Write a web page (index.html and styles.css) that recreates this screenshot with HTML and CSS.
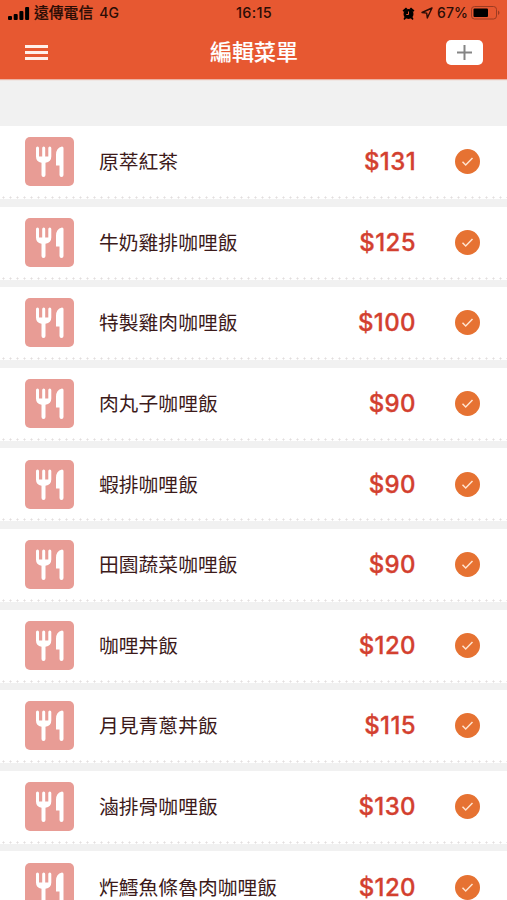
FILE: index.html
```html
<!DOCTYPE html>
<html lang="zh-Hant">
<head>
    <meta charset="UTF-8">
    <meta name="viewport" content="width=device-width, initial-scale=1.0">
    <title>編輯菜單</title>
    <link rel="stylesheet" href="styles.css">
</head>
<body>

<!-- shared icons -->
<svg class="sprite">
    <symbol id="icon-food" viewBox="0 0 49 49">
        <path d="M11 11v8.500q0 5.500 5.500 6.300V38a2 2 0 0 0 4 0V25.800q5.800-.8 5.800-6.300V11a1.500 1.500 0 0 0-3 0v8.500h-3.100V11a1.500 1.500 0 0 0-3 0v8.500h-3.200V11a1.500 1.500 0 0 0-3 0z"/>
        <path d="M38.500 11v27a2 2 0 0 1-4 0V28.500H31V18q0-7.500 6-8.500 1.500 0 1.500 1.500z"/>
    </symbol>
    <symbol id="icon-check" viewBox="0 0 25 25">
        <path d="M7.500 12.800l3.200 3.200 6.800-7"/>
    </symbol>
</svg>

<header class="header">
    <div class="status-bar">
        <div class="status-left">
            <svg class="signal" viewBox="0 0 22 13">
                <rect x="0" y="9" width="4" height="4" rx="1"/>
                <rect x="5.700" y="7" width="4" height="6" rx="1"/>
                <rect x="11.400" y="4" width="4" height="9" rx="1"/>
                <rect x="17.100" y="0" width="4" height="13" rx="1"/>
            </svg>
            <span class="carrier">遠傳電信</span>
            <span class="network">4G</span>
        </div>
        <div class="time">16:15</div>
        <div class="status-right">
            <svg class="alarm" viewBox="0 0 12 13">
                <circle cx="6" cy="7" r="5"/>
                <path d="M0 3.500L3.500.5 5 2 1.500 5zM12 3.500L8.500.5 7 2l3.500 3zM2 10l2 1-2 2-1-1zM10 10l-2 1 2 2 1-1z"/>
                <path class="hands" d="M6 4.500V7.500H3.800"/>
            </svg>
            <svg class="location" viewBox="0 0 12 12">
                <path d="M11 1L1 5.500l4.700.6L6.300 11z"/>
            </svg>
            <span class="percent">67%</span>
            <svg class="battery" viewBox="0 0 29 14">
                <rect class="shell" x=".5" y=".5" width="25" height="12.500" rx="3"/>
                <rect x="2.500" y="2.500" width="14.500" height="8.500" rx="1"/>
                <path class="tip" d="M27 4.500q1.500.7 1.500 2.300T27 9z"/>
            </svg>
        </div>
    </div>
    <nav class="nav-bar">
        <button class="menu-btn" aria-label="menu"><i></i><i></i><i></i></button>
        <h1>編輯菜單</h1>
        <button class="add-btn" aria-label="add">
            <svg viewBox="0 0 15 15"><path d="M7.500 0v15M0 7.500h15"/></svg>
        </button>
    </nav>
</header>

<ul class="menu-list">
    <li class="item">
        <svg class="food"><use href="#icon-food"/></svg>
        <span class="name">原萃紅茶</span><span class="price">$131</span>
        <svg class="check"><use href="#icon-check"/></svg>
    </li>
    <li class="item">
        <svg class="food"><use href="#icon-food"/></svg>
        <span class="name">牛奶雞排咖哩飯</span><span class="price">$125</span>
        <svg class="check"><use href="#icon-check"/></svg>
    </li>
    <li class="item">
        <svg class="food"><use href="#icon-food"/></svg>
        <span class="name">特製雞肉咖哩飯</span><span class="price">$100</span>
        <svg class="check"><use href="#icon-check"/></svg>
    </li>
    <li class="item">
        <svg class="food"><use href="#icon-food"/></svg>
        <span class="name">肉丸子咖哩飯</span><span class="price">$90</span>
        <svg class="check"><use href="#icon-check"/></svg>
    </li>
    <li class="item">
        <svg class="food"><use href="#icon-food"/></svg>
        <span class="name">蝦排咖哩飯</span><span class="price">$90</span>
        <svg class="check"><use href="#icon-check"/></svg>
    </li>
    <li class="item">
        <svg class="food"><use href="#icon-food"/></svg>
        <span class="name">田園蔬菜咖哩飯</span><span class="price">$90</span>
        <svg class="check"><use href="#icon-check"/></svg>
    </li>
    <li class="item">
        <svg class="food"><use href="#icon-food"/></svg>
        <span class="name">咖哩丼飯</span><span class="price">$120</span>
        <svg class="check"><use href="#icon-check"/></svg>
    </li>
    <li class="item">
        <svg class="food"><use href="#icon-food"/></svg>
        <span class="name">月見青蔥丼飯</span><span class="price">$115</span>
        <svg class="check"><use href="#icon-check"/></svg>
    </li>
    <li class="item">
        <svg class="food"><use href="#icon-food"/></svg>
        <span class="name">滷排骨咖哩飯</span><span class="price">$130</span>
        <svg class="check"><use href="#icon-check"/></svg>
    </li>
    <li class="item">
        <svg class="food"><use href="#icon-food"/></svg>
        <span class="name">炸鱈魚條魯肉咖哩飯</span><span class="price">$120</span>
        <svg class="check"><use href="#icon-check"/></svg>
    </li>
</ul>

</body>
</html>
```
FILE: styles.css
```css
* {
    box-sizing: border-box;
}
body {
    margin: 0;
    height: 900px;
    overflow: hidden;
    background: #f1f1f1;
    font-family: Inter, "Noto Sans CJK TC", sans-serif;
    color: #3c1a1a;
}
.sprite {
    display: none;
}
.header {
    height: 79px;
    background: #e75831;
    box-shadow: 0 1px 1px rgba(231, 88, 49, 0.4);
}
.status-bar {
    display: grid;
    grid-template-columns: 1fr auto 1fr;
    align-items: center;
    height: 26px;
    padding: 0 7px 0 8px;
    font-size: 14px;
    font-weight: 500;
    line-height: 26px;
    color: #2b0d06;
}
.status-left, .status-right {
    display: flex;
    align-items: center;
}
.status-right {
    justify-content: flex-end;
}
.signal {
    width: 22px;
    height: 13px;
    margin-right: 4px;
}
.carrier {
    font-size: 14.8px;
    margin-right: 6px;
    -webkit-text-stroke: 0.2px #2b0d06;
}
.time {
    font-size: 14.5px;
    font-weight: 500;
    letter-spacing: 0.3px;
}
.percent {
    letter-spacing: 0.1px;
}
.alarm {
    width: 13px;
    height: 13px;
    margin-right: 6px;
}
.hands {
    fill: none;
    stroke: #e75831;
}
.location {
    width: 12px;
    height: 12px;
    margin-right: 4px;
}
.location path {
    fill: none;
    stroke: #2b0d06;
    stroke-width: 1.4;
    stroke-linejoin: round;
}
.battery {
    width: 29px;
    height: 14px;
    margin-left: 3px;
}
.shell {
    fill: none;
    stroke: #9c3b22;
}
.tip {
    fill: #9c3b22;
}
.nav-bar {
    display: grid;
    grid-template-columns: 1fr auto 1fr;
    align-items: center;
    height: 52px;
    padding: 0 24px 0 25px;
}
.nav-bar h1 {
    margin: 0;
    font-size: 22px;
    font-weight: 500;
    line-height: 50px;
    color: #fff;
    -webkit-text-stroke: 0.1px #fff;
}
.menu-btn {
    display: flex;
    flex-direction: column;
    gap: 3px;
    width: 23px;
    padding: 0;
    border: 0;
    background: none;
}
.menu-btn i {
    height: 3px;
    background: #fff0eb;
}
.add-btn {
    display: flex;
    align-items: center;
    justify-content: center;
    justify-self: end;
    width: 37px;
    height: 25px;
    padding: 0;
    border: 0;
    border-radius: 5px;
    background: #fff;
}
.add-btn svg {
    width: 15px;
    height: 15px;
    stroke: #858585;
    stroke-width: 2;
}
.menu-list {
    margin: 0;
    padding: 47px 0 0;
    list-style: none;
}
.item {
    display: flex;
    align-items: center;
    height: 73px;
    margin-bottom: 7.6px;
    padding: 0 27px 1.4px 25px;
    background: #fff radial-gradient(circle, #e2dede 0.8px, transparent 1.3px) 0 100% / 7px 3px repeat-x;
}
.food {
    width: 49px;
    height: 49px;
    border-radius: 5px;
    background: #e89c95;
    fill: #fff;
}
.name {
    flex: 1;
    margin-left: 25px;
    padding-bottom: 2px;
    font-size: 19.8px;
}
.price {
    font-size: 24px;
    font-weight: 500;
    letter-spacing: 0.4px;
    color: #d3402f;
    -webkit-text-stroke: 0.3px #d3402f;
}
.check {
    width: 25px;
    height: 25px;
    margin-left: 39px;
    border-radius: 50%;
    background: #e67232;
    fill: none;
    stroke: #ffe4cf;
    stroke-width: 1.5;
}
```
